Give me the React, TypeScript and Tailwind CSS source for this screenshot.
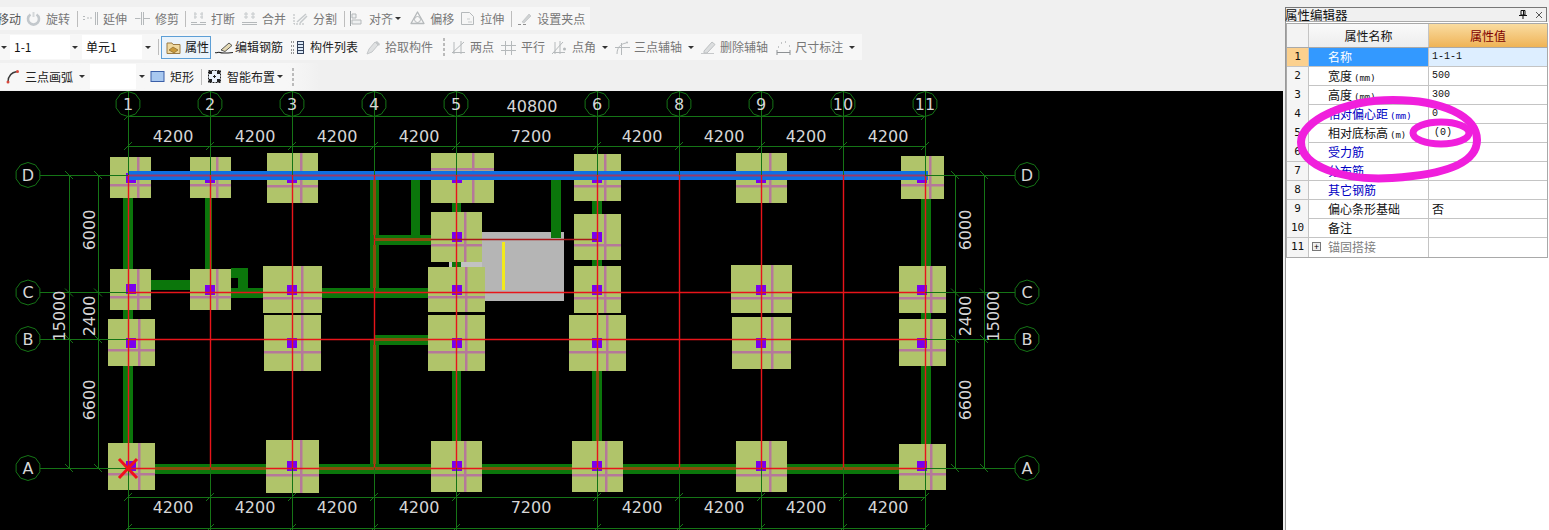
import type { ReactNode } from "react";

const cjk = { fontFamily: '"Noto Sans CJK SC", "Liberation Sans", sans-serif' };

// ---------- toolbar bits ----------
function Ico({ children, w = 15 }: { children: ReactNode; w?: number }) {
  return (
    <svg width={w} height={15} viewBox={`0 0 ${w} 15`} fill="none" className="shrink-0">
      {children}
    </svg>
  );
}

function Tool({ icon, label, className = "", muted = false, gap = "gap-[5px]" }: { icon?: ReactNode; label: string; className?: string; muted?: boolean; gap?: string }) {
  return (
    <div className={`flex items-center shrink-0 ${gap} ${className}`}>
      {icon}
      <span className={`whitespace-nowrap ${muted ? "text-[#777]" : "text-[#222]"}`}>{label}</span>
    </div>
  );
}

function Sep({ className = "" }: { className?: string }) {
  return <div className={`w-px h-[16px] bg-[#bdbdbd] shrink-0 ${className}`} />;
}

function Caret({ className = "" }: { className?: string }) {
  return <div className={`w-0 h-0 shrink-0 border-x-[3px] border-x-transparent border-t-[3px] border-t-[#333] ${className}`} />;
}

function Grip({ className = "" }: { className?: string }) {
  return (
    <div className={`flex flex-col gap-[2px] shrink-0 ${className}`}>
      <div className="w-[2px] h-[3px] bg-[#bbb]" />
      <div className="w-[2px] h-[3px] bg-[#bbb]" />
      <div className="w-[2px] h-[3px] bg-[#bbb]" />
      <div className="w-[2px] h-[3px] bg-[#bbb]" />
    </div>
  );
}

const g = "#b5b9bb";

const icons = {
  rotate: (
    <Ico>
      <path d="M4.5 3.5a5.5 5.5 0 1 0 6 0" stroke="#c3c8cc" strokeWidth="2.6" />
      <path d="M7.5 1v5" stroke="#d5d8da" strokeWidth="2" />
    </Ico>
  ),
  extend: (
    <Ico>
      <path d="M0 5.500h2M0 8.500h2M4 7h6" stroke={g} strokeDasharray="2 1" />
      <path d="M12.500 1v13M14.500 1v13" stroke={g} />
    </Ico>
  ),
  trim: (
    <Ico>
      <path d="M0 7.500h5.500M9 7.500h6" stroke={g} />
      <path d="M6.500 1v13M8.500 1v13" stroke={g} />
    </Ico>
  ),
  split: (
    <Ico>
      <path d="M0 11.500h6M9 11.500h6M0 13.500h15" stroke={g} />
      <path d="M3 3h3M9 3h3M3 6h3M9 6h3M4 1v7M11 1v7" stroke="#c6cacc" />
    </Ico>
  ),
  merge: (
    <Ico>
      <path d="M0 11.500h15M0 13.500h15" stroke={g} />
      <path d="M2 3h4M9 3h4M2 6h4M9 6h4M4 1v7M11 1v7" stroke="#c6cacc" />
    </Ico>
  ),
  cut: (
    <Ico>
      <path d="M1 3v10h11" stroke={g} strokeDasharray="2 1" />
      <path d="M4 11 13 3M7 12l7-7" stroke="#c6cacc" strokeWidth="1.500" />
    </Ico>
  ),
  align: (
    <Ico>
      <path d="M1.500 0v15" stroke="#9aa0a3" />
      <path d="M3 3h4v4H3zM3 9h9v4H3z" stroke={g} fill="#eef0f1" />
    </Ico>
  ),
  offset: (
    <Ico>
      <path d="M7.500 1 14 12.500H1z" stroke={g} strokeWidth="1.300" strokeLinejoin="round" />
      <circle cx="7.500" cy="8.500" r="3" stroke={g} />
    </Ico>
  ),
  stretch: (
    <Ico>
      <path d="M1.500 1.500h8l4 4v8h-12z" stroke={g} fill="#f6f6f6" />
      <path d="M7 8h3M8 11h4" stroke="#c9cccd" />
    </Ico>
  ),
  grip: (
    <Ico>
      <path d="M1 13.500h3M6 13.500h3" stroke="#8f8f8f" />
      <path d="m5 11 7-8 2 2-7 7z" fill="#cfd2d3" stroke="#b3b6b8" strokeWidth=".5" />
    </Ico>
  ),
  props: (
    <Ico>
      <path d="M1 3h5l1 1.500h7v9H1z" fill="#f0d9a0" stroke="#9a7b45" />
      <path d="m3 10 4-3 5 3-4 3z" fill="#c89a3c" stroke="#7a5a22" strokeWidth=".6" />
    </Ico>
  ),
  rebar: (
    <Ico w={18}>
      <path d="M0 12.500c2 1 3-1 5 0s8 .5 13 0" stroke="#222" strokeWidth="1.100" />
      <path d="m6 10 8-7 3 2.500-7 6z" fill="#e4d9b4" stroke="#333" strokeWidth=".8" />
    </Ico>
  ),
  list: (
    <Ico>
      <path d="M1 2h3M1 6h3M1 10h3M1 13h3" stroke="#333" strokeDasharray="1 1" />
      <rect x="7.500" y="1.500" width="6" height="12" fill="#dce9f7" stroke="#33415a" />
      <path d="M8 4.500h5M8 7.500h5M8 10.500h5" stroke="#33415a" />
    </Ico>
  ),
  pick: (
    <Ico>
      <path d="m1 14 2-5 6-7 3 3-6 7z" fill="#dfe1e2" stroke="#c4c7c9" />
      <path d="m9 2 2-1 3 3-1 2z" fill="#c4c7c9" />
    </Ico>
  ),
  twoPt: (
    <Ico>
      <path d="M1 12.500h13M3 2v12M10 1v13M1 13 13 2" stroke={g} />
    </Ico>
  ),
  parallel: (
    <Ico>
      <path d="M0 5.500h15M0 10.500h15M4.500 1v14M10.500 1v14" stroke={g} />
    </Ico>
  ),
  angle: (
    <Ico>
      <path d="M1 12.500h12M3 2v12M8 1v13M0 14 11 2" stroke={g} />
      <circle cx="12.500" cy="9" r="1.500" fill={g} />
    </Ico>
  ),
  threePt: (
    <Ico>
      <path d="M2 14c0-6 3-10 9-11M0 7.500h15M6.500 3v12" stroke={g} />
      <circle cx="12" cy="2.500" r="1" fill={g} />
    </Ico>
  ),
  erase: (
    <Ico>
      <path d="M0 13.500h13" stroke="#c6c8ca" />
      <path d="m3 11 8-9 3 2.500-8 8.500H3z" fill="#dcdedf" stroke="#bdc0c2" />
    </Ico>
  ),
  dim: (
    <Ico>
      <path d="M1 10v5M14 10v5M1 12.500h13" stroke="#8d9194" />
      <path d="M2 7h1M5 3h1M9 2h1M13 6h1" stroke="#8d9194" />
    </Ico>
  ),
  arc: (
    <Ico>
      <path d="M3 13C3 7 6 3.500 12 2.500" stroke="#3a3a3a" strokeWidth="1.300" />
      <circle cx="3" cy="13" r="1.500" fill="#d8483c" />
      <circle cx="12.500" cy="2.500" r="1.500" fill="#d8483c" />
    </Ico>
  ),
  rect: (
    <Ico>
      <rect x="1" y="2.500" width="13" height="10" fill="#a8c8f0" stroke="#3a5fa8" />
    </Ico>
  ),
  smart: (
    <Ico>
      <rect x="1.500" y="1.500" width="12" height="12" fill="#eaf2fb" stroke="#222" strokeDasharray="2 1" />
      <path d="M2 2h3v3H2zM10 2h3v3h-3zM2 10h3v3H2zM10 10h3v3h-3z" fill="#222" />
      <path d="M7 6h1v3H7zM6 7h3v1H6z" fill="#222" />
    </Ico>
  ),
};

function Toolbars() {
  return (
    <div className="h-[91px] pt-[7px] bg-[#f0f0f0] text-[12px] overflow-hidden" style={cjk}>
      {/* row 1 */}
      <div className="flex items-center h-[23px] w-[590px] bg-[#f7f7f7]">
        <span className="-ml-[3px] text-[#555] whitespace-nowrap">移动</span>
        <Tool muted className="ml-[5px]" icon={icons.rotate} label="旋转" />
        <Sep className="ml-[7px]" />
        <Tool muted className="ml-[5px]" icon={icons.extend} label="延伸" />
        <Tool muted className="ml-[8px]" icon={icons.trim} label="修剪" />
        <Sep className="ml-[6px]" />
        <Tool muted className="ml-[5px]" icon={icons.split} label="打断" />
        <Tool muted className="ml-[7px]" icon={icons.merge} label="合并" />
        <Tool muted className="ml-[7px]" icon={icons.cut} label="分割" />
        <Sep className="ml-[7px]" />
        <Tool muted className="ml-[4px]" icon={icons.align} label="对齐" />
        <Caret className="ml-[2px]" />
        <Tool muted className="ml-[9px]" icon={icons.offset} label="偏移" />
        <Tool muted className="ml-[6px]" icon={icons.stretch} label="拉伸" />
        <Sep className="ml-[7px]" />
        <Tool muted className="ml-[5px]" icon={icons.grip} label="设置夹点" />
      </div>

      {/* row 2 */}
      <div className="flex items-center h-[26px] w-[862px] mt-[4px] bg-[#f7f7f7]">
        <Caret className="ml-[1px]" />
        <div className="ml-[3px] w-[60px] h-[24px] pl-[4px] bg-white text-[#111] leading-[24px]">1-1</div>
        <Caret className="ml-[2px]" />
        <div className="ml-[4px] w-[60px] h-[24px] pl-[4px] bg-white text-[#111] leading-[24px]">单元1</div>
        <Caret className="ml-[3px]" />
        <Sep className="ml-[7px]" />
        <div className="ml-[2px] w-[50px] h-[23px] flex items-center gap-[4px] pl-[4px] border border-[#5d9fd6] bg-[#eaf3fb] shrink-0">
          {icons.props}
          <span className="text-[#111]">属性</span>
        </div>
        <Tool className="ml-[4px]" gap="gap-[2px]" icon={icons.rebar} label="编辑钢筋" />
        <Tool className="ml-[7px]" icon={icons.list} label="构件列表" />
        <Tool muted className="ml-[8px]" gap="gap-[4px]" icon={icons.pick} label="拾取构件" />
        <Grip className="ml-[10px]" />
        <Tool muted className="ml-[6px]" gap="gap-[4px]" icon={icons.twoPt} label="两点" />
        <Tool muted className="ml-[7px]" icon={icons.parallel} label="平行" />
        <Tool muted className="ml-[7px]" icon={icons.angle} label="点角" />
        <Caret className="ml-[6px]" />
        <Tool muted className="ml-[7px]" gap="gap-[4px]" icon={icons.threePt} label="三点辅轴" />
        <Caret className="ml-[6px]" />
        <Tool muted className="ml-[7px]" gap="gap-[4px]" icon={icons.erase} label="删除辅轴" />
        <Tool muted className="ml-[8px]" gap="gap-[4px]" icon={icons.dim} label="尺寸标注" />
        <Caret className="ml-[6px]" />
      </div>

      {/* row 3 */}
      <div className="flex items-center h-[27px] w-[320px] mt-[3px] bg-gradient-to-r from-[#f7f7f7] from-90% to-[#f0f0f0]">
        <Tool className="ml-[5px]" icon={icons.arc} label="三点画弧" />
        <Caret className="ml-[6px]" />
        <div className="ml-[5px] w-[46px] h-[25px] bg-white" />
        <Caret className="ml-[3px]" />
        <Tool className="ml-[5px]" icon={icons.rect} label="矩形" />
        <Sep className="ml-[7px]" />
        <Tool className="ml-[5px]" icon={icons.smart} label="智能布置" />
        <Caret className="ml-[2px]" />
        <Grip className="ml-[9px]" />
      </div>
    </div>
  );
}

// ---------- drawing data, all in page coordinates ----------
const GREEN = "#157416";
const WALL = "#0b760b";
const RED = "#e8141a";
const BROWN = "#8c4a0c";

const axisX: [string, number][] = [
  ["1", 128], ["2", 210], ["3", 292], ["4", 374], ["5", 456], ["6", 597],
  ["8", 679], ["9", 761], ["10", 843], ["11", 925],
];
const axisY: [string, number][] = [["D", 175], ["C", 292.5], ["B", 339], ["A", 468]];
const spans: [string, number][] = [
  ["4200", 173], ["4200", 255], ["4200", 337], ["4200", 419], ["7200", 531],
  ["4200", 642], ["4200", 724], ["4200", 806], ["4200", 888],
];

// x, y, w, h, pink vertical x, pink horizontal y, column square x, square y
const footings: number[][] = [
  [110, 157, 41, 41, 138, 185, 126, 173],
  [190, 157, 41, 41, 217, 185, 205, 173],
  [267, 153, 51, 50, 301, 186, 287, 173],
  [431, 153, 63, 50, 473, 169, 452, 173],
  [574, 154, 47, 47, 605, 186, 592, 173],
  [736, 153, 51, 50, 770, 186, 756, 173],
  [901, 156, 43, 43, 930, 185, 917, 173],
  [431, 212, 51, 50, 465, 245, 452, 232],
  [574, 214, 47, 46, 605, 245, 592, 232],
  [110, 269, 41, 41, 138, 297, 126, 284],
  [190, 269, 41, 41, 217, 297, 205, 285],
  [263, 266, 59, 47, 302, 298, 287, 285],
  [428, 267, 57, 45, 466, 297, 452, 285],
  [574, 266, 47, 47, 605, 298, 592, 285],
  [731, 265, 61, 48, 772, 298, 756, 285],
  [899, 266, 47, 47, 931, 298, 917, 285],
  [108, 319, 47, 47, 139, 350, 126, 338],
  [264, 315, 57, 56, 302, 352, 287, 338],
  [428, 315, 57, 56, 466, 352, 452, 338],
  [569, 315, 57, 56, 607, 352, 592, 338],
  [732, 317, 59, 52, 772, 352, 756, 338],
  [899, 319, 47, 47, 931, 350, 917, 338],
  [108, 443, 47, 47, 139, 474, 126, 461],
  [266, 440, 53, 53, 301, 475, 287, 461],
  [431, 441, 51, 51, 465, 475, 452, 461],
  [572, 441, 51, 51, 606, 475, 592, 461],
  [736, 441, 51, 51, 770, 475, 756, 461],
  [899, 444, 47, 46, 931, 474, 917, 461],
];

// x, y, w, h
const walls: number[][] = [
  [123, 198, 10, 71], [123, 310, 10, 9], [123, 366, 10, 78],
  [205, 198, 7, 71], [151, 280, 39, 10],
  [231, 268, 12, 10], [238, 268, 10, 30], [231, 288, 32, 10],
  [322, 288, 106, 10], [370, 180, 9, 118], [370, 340, 9, 128], [375, 335, 53, 10],
  [375, 235, 56, 10], [411, 180, 9, 55], [551, 180, 10, 58],
  [452, 203, 9, 9], [452, 262, 9, 5], [452, 371, 9, 70],
  [592, 201, 10, 13], [592, 260, 10, 6], [592, 371, 10, 70],
  [128, 464, 798, 10], [921, 199, 10, 67], [921, 313, 10, 6], [921, 366, 10, 78],
];

function Label({ x, y, children, rotate = false }: { x: number; y: number; children: ReactNode; rotate?: boolean }) {
  return (
    <text
      x={x}
      y={y}
      fill="#d6d6d6"
      fontSize={16}
      fontFamily='"DejaVu Sans", sans-serif'
      textAnchor="middle"
      dominantBaseline="central"
      transform={rotate ? `rotate(-90 ${x} ${y})` : undefined}
    >
      {children}
    </text>
  );
}

function Octagon({ x, y }: { x: number; y: number }) {
  const r = 12.5;
  const pts = Array.from({ length: 10 }, (_, i) => {
    const a = (Math.PI * 2 * i) / 10 + Math.PI / 2;
    return `${x + r * Math.cos(a)},${y - r * Math.sin(a)}`;
  }).join(" ");
  return <polygon points={pts} fill="#000" stroke={GREEN} strokeWidth={1} />;
}

function Tick({ x, y, flip = false }: { x: number; y: number; flip?: boolean }) {
  return flip ? (
    <path d={`M${x - 4} ${y - 4}L${x + 4} ${y + 4}`} stroke={GREEN} />
  ) : (
    <path d={`M${x - 4} ${y + 4}L${x + 4} ${y - 4}`} stroke={GREEN} />
  );
}

function Drawing() {
  const left = axisX[0][1];
  const right = axisX[axisX.length - 1][1];
  const top = axisY[0][1];
  const bottom = axisY[3][1];
  return (
    <div className="flex-1 bg-black overflow-hidden">
      <svg width={1283} height={439} viewBox="0 91 1283 439" className="block">
        {/* slab */}
        <rect x={482} y={232} width={82} height={69} fill="#b5b5b5" />
        <rect x={449} y={262} width={33} height={5} fill="#c2c2c2" />
        <rect x={502} y={242} width={3} height={48} fill="#f2ea1c" />

        {walls.map((w, i) => (
          <rect key={i} x={w[0]} y={w[1]} width={w[2]} height={w[3]} fill={WALL} />
        ))}

        {footings.map((f, i) => (
          <g key={i}>
            <rect x={f[0]} y={f[1]} width={f[2]} height={f[3]} fill="#b0c46a" />
            <rect x={f[0]} y={f[5] - 1} width={f[2]} height={2.5} fill="#b5789a" />
            <rect x={f[4] - 1} y={f[1]} width={2.5} height={f[3]} fill="#b5789a" />
            <rect x={f[6]} y={f[7]} width={10} height={10} fill="#7a00ee" />
          </g>
        ))}

        {/* beam */}
        <rect x={128} y={171} width={800} height={9} fill="#0f6fe2" />
        <path d="M128 175.500H928" stroke="#9a3a6a" strokeWidth={2} />

        {/* red axis grid */}
        {axisX.map(([n, x]) => (
          <path key={n} d={`M${x + 0.5} ${top}V${bottom}`} stroke={RED} strokeWidth={1.4} />
        ))}
        <path d={`M${left} 292.500H${right}M${left} 339.500H${right}M${left} 468.500H${right}`} stroke={RED} strokeWidth={1.4} />
        <path d="M374 239.500H597" stroke="#a8181a" strokeWidth={1.4} />

        {/* axis lines turn brown where they run along a wall */}
        <path
          d="M155 468.500H266M319 468.500H431M482 468.500H572M623 468.500H736M787 468.500H899M374.500 180V235M374.500 245V288M374.500 345V464M597.500 371V441M375 339.500H428M375 239.500H431"
          stroke={BROWN}
          strokeWidth={3}
        />

        {/* green grid and dimension lines */}
        {axisX.map(([n, x]) => (
          <path key={n} d={`M${x + 0.5} 116V${top}M${x + 0.5} ${bottom}V530`} stroke={GREEN} />
        ))}
        <path d={`M${left} 116.500H${right}M${left} 146.500H${right}M${left} 497.500H${right}M${left} 528.500H${right}`} stroke={GREEN} />
        <path d={`M69.500 ${top}V${bottom}M98.500 ${top}V${bottom}M955.500 ${top}V${bottom}M984.500 ${top}V${bottom}`} stroke={GREEN} />
        {axisY.map(([n, y]) => (
          <path key={n} d={`M40 ${Math.floor(y) + 0.5}H${left}M${right} ${Math.floor(y) + 0.5}H1015`} stroke={GREEN} />
        ))}
        {axisX.map(([n, x]) => (
          <g key={n}>
            <Tick x={x} y={146} />
            <Tick x={x} y={497} />
            <Tick x={x} y={528} />
          </g>
        ))}
        <Tick x={left} y={116} />
        <Tick x={right} y={116} />
        {axisY.map(([n, y]) => (
          <g key={n}>
            <Tick flip x={69} y={y} />
            <Tick flip x={98} y={y} />
            <Tick flip x={955} y={y} />
            <Tick flip x={984} y={y} />
          </g>
        ))}

        {/* red cross on the origin */}
        <path d="M119 459l18 19M137 459l-18 19" stroke="#f0101c" strokeWidth={3} />

        {axisX.map(([n, x]) => (
          <g key={n}>
            <Octagon x={x} y={104} />
            <path d={`M${x + 0.5} 91.500V116`} stroke={GREEN} />
            <Label x={x} y={104}>{n}</Label>
          </g>
        ))}
        {axisY.map(([n, y]) => (
          <g key={n}>
            <Octagon x={28} y={y} />
            <Label x={28} y={y}>{n}</Label>
            <Octagon x={1027} y={y} />
            <Label x={1027} y={y}>{n}</Label>
          </g>
        ))}

        <Label x={532} y={106}>40800</Label>
        {spans.map(([t, x]) => (
          <g key={x}>
            <Label x={x} y={136}>{t}</Label>
            <Label x={x} y={507}>{t}</Label>
          </g>
        ))}
        <Label rotate x={89} y={230}>6000</Label>
        <Label rotate x={89} y={316}>2400</Label>
        <Label rotate x={59} y={316}>15000</Label>
        <Label rotate x={89} y={400}>6600</Label>
        <Label rotate x={965} y={230}>6000</Label>
        <Label rotate x={965} y={316}>2400</Label>
        <Label rotate x={993} y={316}>15000</Label>
        <Label rotate x={965} y={400}>6600</Label>
      </svg>
    </div>
  );
}

// ---------- property grid ----------
const rows: { name: string; unit?: string; value?: string; blue?: boolean; gray?: boolean; plus?: boolean }[] = [
  { name: "名称", value: "1-1-1" },
  { name: "宽度", unit: "(mm)", value: "500" },
  { name: "高度", unit: "(mm)", value: "300" },
  { name: "相对偏心距", unit: "(mm)", value: "0", blue: true },
  { name: "相对底标高", unit: "(m)", value: "(0)" },
  { name: "受力筋", blue: true },
  { name: "分布筋", blue: true },
  { name: "其它钢筋", blue: true },
  { name: "偏心条形基础", value: "否" },
  { name: "备注" },
  { name: "锚固搭接", gray: true, plus: true },
];

function PropertyPanel() {
  return (
    <div className="relative flex-1 flex flex-col pt-[7px] bg-[#f0f0f0] text-[12px] text-[#111]" style={cjk}>
      <div className="ml-[2px] mr-[2px] h-[15px] flex items-center justify-between border border-[#777] border-b-[#aaa] bg-[#f0f0f0] shrink-0">
        <span className="text-[12.500px] leading-[13px] -ml-px">属性编辑器</span>
        <div className="flex items-center gap-[8px] pr-[3px]">
          <svg width="8" height="9" viewBox="0 0 8 9" fill="none">
            <path d="M2 .5h4v4.500H2zM0 5.500h8M4 6v3" stroke="#111" />
            <path d="M4.500 1v4" stroke="#111" />
          </svg>
          <svg width="8" height="8" viewBox="0 0 8 8" fill="none">
            <path d="m1 1 6 6M7 1 1 7" stroke="#555" />
          </svg>
        </div>
      </div>
      <div className="flex-1 ml-[2px] bg-white border-l border-[#999]">
        <div className="w-[262px] border border-[#a9a9a9] mt-px bg-white">
          <div className="grid grid-cols-[22px_120px_118px] h-[24px] border-b border-[#a9a9a9]">
            <div className="bg-[#f3f3f3] border-r border-[#c4c4c4]" />
            <div className="bg-gradient-to-b from-[#fafafa] to-[#ededed] border-r border-[#c4c4c4] flex items-center justify-center">属性名称</div>
            <div className="bg-gradient-to-b from-[#f9dca0] to-[#efb354] text-[#800000] flex items-center justify-center">属性值</div>
          </div>
          {rows.map((r, i) => (
            <div key={r.name} className="grid grid-cols-[22px_120px_118px] h-[19px] border-b border-[#c4c4c4] last:border-b-0 leading-[18px]">
              <div className={`text-center text-[11px] border-r border-[#c4c4c4] ${i === 0 ? "bg-[#fbd08e]" : "bg-[#f5f5f5]"}`} style={{ fontFamily: '"DejaVu Sans Mono", monospace' }}>
                {i + 1}
              </div>
              <div className={`relative pl-[19px] border-r border-[#c4c4c4] whitespace-nowrap ${i === 0 ? "bg-[#3399ff] text-white" : r.blue ? "text-[#0000c4]" : r.gray ? "text-[#808080]" : ""}`}>
                {r.plus && (
                  <span className="absolute left-[3px] top-[4px] w-[9px] h-[9px] border border-[#777] bg-[#eee] flex items-center justify-center text-[9px] leading-[9px] text-black">+</span>
                )}
                {r.name}
                {r.unit && <span className="ml-[2px] text-[9px]" style={{ fontFamily: '"DejaVu Sans Mono", monospace' }}>{r.unit}</span>}
              </div>
              <div className={`pl-[3px] text-[10px] whitespace-nowrap ${i === 0 ? "bg-[#ddeeff]" : ""}`} style={{ fontFamily: '"Liberation Mono", "Noto Sans CJK SC", monospace' }}>
                {r.value === "否" ? <span className="text-[12px]" style={cjk}>否</span> : r.value === "(0)" ? <span className="ml-[2px]">(0)</span> : r.value}
              </div>
            </div>
          ))}
        </div>
      </div>

      {/* hand-drawn marks lying over the grid */}
      <svg className="absolute left-0 top-0 pointer-events-none" width={266} height={200} viewBox="1283 0 266 200" fill="none">
        <path
          d="M1393 100C1442 100 1477 116 1477 140C1477 165 1440 175 1392 178C1342 181 1301 166 1301 142C1301 121 1345 100 1393 100Z"
          stroke="#f01fdc"
          strokeWidth={8}
        />
        <ellipse cx={1441} cy={133} rx={28} ry={11} stroke="#f01fdc" strokeWidth={7} />
      </svg>
    </div>
  );
}

export default function App() {
  return (
    <div className="w-[1549px] h-[530px] flex overflow-hidden bg-[#f0f0f0]">
      <div className="w-[1283px] flex flex-col shrink-0">
        <Toolbars />
        <Drawing />
      </div>
      <PropertyPanel />
    </div>
  );
}
